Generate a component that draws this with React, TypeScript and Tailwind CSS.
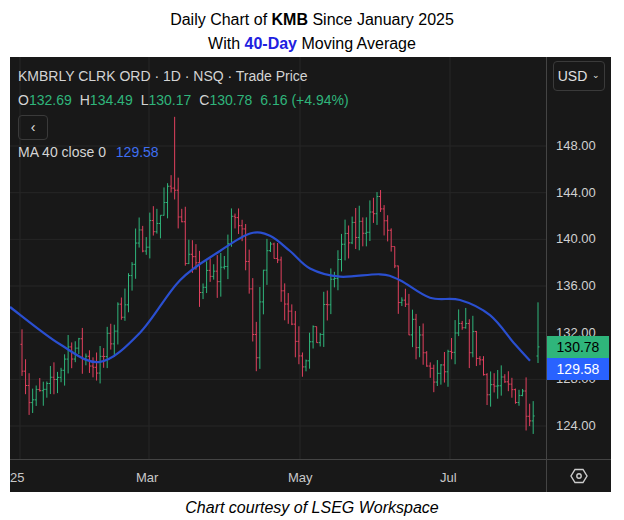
import React from "react";

const path: [number, number][] = [[10,131],[20,126],[40,127],[60,131],[90,129],[110,134],[130,140],[150,142],[165,145],[175,139],[190,136],[210,137],[225,142],[237,139],[245,130],[260,141],[275,135],[292,130],[310,132],[330,139],[350,141],[370,143],[380,139],[390,134],[405,132],[415,129],[430,128],[450,132],[465,131],[475,128],[490,127],[510,127],[524,125],[528,131]];
const ma: [number, number][] = [[0,134.2],[50,131],[90,129.5],[130,132],[170,136.5],[210,139],[240,140.5],[260,140.3],[280,139],[300,137.5],[330,136.8],[370,137],[390,136.5],[420,135],[450,134.8],[480,133.5],[505,131],[520,129.6]];
const interp = (pts: [number, number][], x: number) => {
  for (let i = 0; i < pts.length - 1; i++) {
    const [x0, y0] = pts[i], [x1, y1] = pts[i + 1];
    if (x >= x0 && x <= x1) return y0 + ((x - x0) / (x1 - x0)) * (y1 - y0);
  }
  return pts[pts.length - 1][1];
};
const py = (p: number) => 89 + (148 - p) * 11.667;
let seed = 7;
const rnd = () => { seed = (seed * 16807) % 2147483647; return seed / 2147483647; };

const bars: { x: number; o: number; h: number; l: number; c: number }[] = [];
let prev = 131;
for (let x = 12; x <= 528; x += 3.55) {
  const t = interp(path, x);
  const o = prev;
  const c = t + (rnd() - 0.5) * 2.6;
  const h = Math.max(o, c) + rnd() * 1.4;
  const l = Math.min(o, c) - rnd() * 1.4;
  bars.push({ x, o, h, l, c });
  prev = c;
}
bars[bars.length - 1] = { x: 528, o: 130, h: 134.6, l: 129.4, c: 130.78 };
const spike = bars.find((b) => b.x > 163 && b.x < 167);
if (spike) spike.h = 150.5;

const pts = ma.map(([x, p]) => [x, py(p)] as [number, number]);
let maPath = `M${pts[0][0]},${pts[0][1]}`;
for (let i = 0; i < pts.length - 1; i++) {
  const p0 = pts[Math.max(0, i - 1)], p1 = pts[i], p2 = pts[i + 1], p3 = pts[Math.min(pts.length - 1, i + 2)];
  const c1 = [p1[0] + (p2[0] - p0[0]) / 6, p1[1] + (p2[1] - p0[1]) / 6];
  const c2 = [p2[0] - (p3[0] - p1[0]) / 6, p2[1] - (p3[1] - p1[1]) / 6];
  maPath += ` C${c1[0].toFixed(1)},${c1[1].toFixed(1)} ${c2[0].toFixed(1)},${c2[1].toFixed(1)} ${p2[0]},${p2[1].toFixed(1)}`;
}
const levels = [148, 144, 140, 136, 132, 128, 124];

export default function App() {
  const f = { fontFamily: "Arial, 'Liberation Sans', sans-serif" };
  return (
    <div className="w-[624px] h-[520px] bg-white flex flex-col items-center" style={f}>
      <div className="text-[16px] leading-[24px] text-black text-center pt-[8px] h-[58px]">
        <div>Daily Chart of <b>KMB</b> Since January 2025</div>
        <div>With <b className="text-[#2020e0]">40-Day</b> Moving Average</div>
      </div>
      <div className="w-[601px] h-[435px] bg-[#181818] flex self-start ml-[10px]">
        <div className="w-[536px] flex flex-col">
          <div className="relative h-[402px]">
            <svg width="536" height="402" className="absolute inset-0">
              {levels.map((p) => (<line key={p} x1="0" x2="536" y1={py(p)} y2={py(p)} stroke="#262626" />))}
              {[10, 139, 290, 440].map((x) => (<line key={x} x1={x} x2={x} y1="0" y2="402" stroke="#262626" />))}
              {bars.map((b, i) => {
                const col = b.c >= b.o ? "#2fb57b" : "#e0405e";
                return (
                  <g key={i} stroke={col} strokeWidth="1">
                    <line x1={b.x} x2={b.x} y1={py(b.h)} y2={py(b.l)} />
                    <line x1={b.x - 1.5} x2={b.x} y1={py(b.o)} y2={py(b.o)} />
                    <line x1={b.x} x2={b.x + 1.5} y1={py(b.c)} y2={py(b.c)} />
                  </g>
                );
              })}
              <path d={maPath} stroke="#2a4fd0" strokeWidth="2.2" fill="none" />
            </svg>
            <div className="absolute left-[8px] top-[9px] text-[14px] text-[#d4d4d4]">KMBRLY CLRK ORD · 1D · NSQ · Trade Price</div>
            <div className="absolute left-[8px] top-[33px] text-[14px] text-[#d4d4d4] flex gap-[8px]">
              <span>O<span className="text-[#2fb57b]">132.69</span></span>
              <span>H<span className="text-[#2fb57b]">134.49</span></span>
              <span>L<span className="text-[#2fb57b]">130.17</span></span>
              <span>C<span className="text-[#2fb57b]">130.78</span></span>
              <span className="text-[#2fb57b]">6.16 (+4.94%)</span>
            </div>
            <div className="absolute left-[8px] top-[58px] w-[30px] h-[25px] border border-[#3a3a3a] rounded-[4px] flex items-center justify-center text-[#e0e0e0] text-[14px]">‹</div>
            <div className="absolute left-[8px] top-[85px] text-[14px] text-[#d4d4d4]">MA 40 close 0 <span className="ml-[6px] text-[#3f6ff0]">129.58</span></div>
          </div>
          <div className="h-[33px] border-t border-[#444] relative text-[13px] text-[#c8c8c8]">
            <span className="absolute left-[0px] top-[8px]">25</span>
            <span className="absolute left-[126px] top-[8px]">Mar</span>
            <span className="absolute left-[278px] top-[8px]">May</span>
            <span className="absolute left-[430px] top-[8px]">Jul</span>
          </div>
        </div>
        <div className="w-[65px] border-l border-[#444] flex flex-col">
          <div className="relative h-[402px]">
            <div className="absolute left-[6px] top-[4px] w-[52px] h-[30px] border border-[#3a3a3a] rounded-[4px] flex items-center justify-center gap-[5px] text-[14px] text-[#e0e0e0]">USD <span className="text-[9px]">⌄</span></div>
            {levels.map((p) => (
              <div key={p} className="absolute left-[9px] text-[13px] text-[#d0d0d0] leading-[14px]" style={{ top: py(p) - 7 }}>{p.toFixed(2)}</div>
            ))}
            <div className="absolute z-10 left-0 w-[62px] h-[22px] bg-[#2fb57b] text-black text-[14px] flex items-center justify-center" style={{ top: 279 }}>130.78</div>
            <div className="absolute z-10 left-0 w-[62px] h-[22px] bg-[#2962ff] text-white text-[14px] flex items-center justify-center" style={{ top: 301 }}>129.58</div>
          </div>
          <div className="h-[33px] border-t border-[#444] flex items-center justify-center">
            <svg width="18" height="18" viewBox="0 0 18 18" fill="none" stroke="#ccc" strokeWidth="1.4">
              <path d="M5 2.5h8L17 9l-4 6.5H5L1 9z" />
              <circle cx="9" cy="9" r="2.2" />
            </svg>
          </div>
        </div>
      </div>
      <div className="italic text-[16px] text-black mt-[4px]">Chart courtesy of LSEG Workspace</div>
    </div>
  );
}
